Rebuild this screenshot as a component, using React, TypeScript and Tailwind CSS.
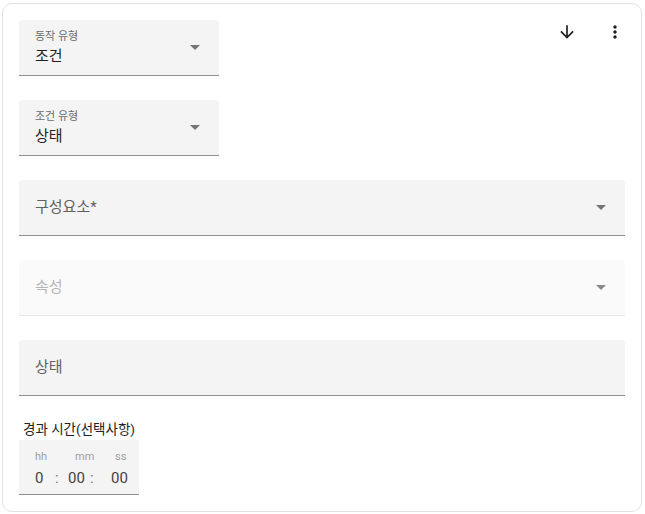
const font = "font-['Roboto','Noto_Sans_CJK_KR',sans-serif]";

function Caret({ color = '#757575' }: { color?: string }) {
    return (
        <svg width="10" height="5" viewBox="0 0 10 5" className="shrink-0">
            <path d="M0 0h10L5 5z" fill={color} />
        </svg>
    );
}

function SelectField({
    label,
    value,
    wide,
    disabled,
    caret = true,
}: {
    label: string;
    value?: string;
    wide?: boolean;
    disabled?: boolean;
    caret?: boolean;
}) {
    const box = disabled
        ? 'bg-[#fafafa] border-[#e8e8e8]'
        : 'bg-[#f4f4f4] border-[#8f8f8f]';
    return (
        <div
            className={`flex h-[56px] items-center rounded-t-[4px] border-b pl-[16px] pr-[19px] ${box} ${wide ? 'w-full' : 'w-[200px]'}`}
        >
            {value ? (
                <div className="flex flex-1 flex-col pt-[1px]">
                    <span className="text-[11px] leading-[14px] text-[#6b6b6b]">{label}</span>
                    <span className="mt-[2px] text-[15px] leading-[20px] text-[#1f1f1f]">{value}</span>
                </div>
            ) : (
                <span
                    className={`-mt-[2px] flex-1 text-[15px] leading-[20px] ${disabled ? 'text-[#b5b5b5]' : 'text-[#616161]'}`}
                >
                    {label}
                </span>
            )}
            {caret && <Caret color={disabled ? '#8a8a8a' : '#757575'} />}
        </div>
    );
}

export default function App() {
    return (
        <div className={`min-h-[514px] bg-white pl-[2px] pt-[3px] ${font}`}>
            <div className="flex h-[509px] w-[640px] flex-col rounded-[10px] border border-[#e2e2e2] px-[16px] pt-[16px]">
                <div className="flex items-start justify-between">
                    <SelectField label="동작 유형" value="조건" />
                    <div className="mt-[2px] flex items-center gap-[28px]">
                        <svg width="20" height="20" viewBox="0 0 24 24">
                            <path
                                d="M20 12l-1.41-1.41L13 16.17V4h-2v12.17l-5.58-5.59L4 12l8 8 8-8z"
                                fill="#1f1f1f"
                            />
                        </svg>
                        <svg width="20" height="20" viewBox="0 0 24 24">
                            <path
                                d="M12 8c1.1 0 2-.9 2-2s-.9-2-2-2-2 .9-2 2 .9 2 2 2zm0 2c-1.1 0-2 .9-2 2s.9 2 2 2 2-.9 2-2-.9-2-2-2zm0 6c-1.1 0-2 .9-2 2s.9 2 2 2 2-.9 2-2-.9-2-2-2z"
                                fill="#1f1f1f"
                            />
                        </svg>
                    </div>
                </div>
                <div className="mt-[24px]">
                    <SelectField label="조건 유형" value="상태" />
                </div>
                <div className="mt-[24px]">
                    <SelectField label="구성요소*" wide />
                </div>
                <div className="mt-[24px]">
                    <SelectField label="속성" wide disabled />
                </div>
                <div className="mt-[24px]">
                    <SelectField label="상태" wide caret={false} />
                </div>
                <div className="ml-[4px] mt-[23px] text-[13.5px] leading-[20px] text-[#212121]">
                    경과 시간(선택사항)
                </div>
                <div className="mt-[1px] h-[55px] w-[120px] border-b border-[#8f8f8f] bg-[#f4f4f4] pt-[10px]">
                    <div className="flex pl-[16px] text-[11px] leading-[13px] text-[#9e9e9e]">
                        <span className="w-[40px]">hh</span>
                        <span className="w-[40px]">mm</span>
                        <span>ss</span>
                    </div>
                    <div className="mt-[5px] flex pl-[16px] text-[15px] leading-[20px] text-[#424242]">
                        <span className="w-[20px]">0</span>
                        <span className="w-[13px] text-[#757575]">:</span>
                        <span className="w-[22px]">00</span>
                        <span className="w-[21px] text-[#757575]">:</span>
                        <span>00</span>
                    </div>
                </div>
            </div>
        </div>
    );
}
